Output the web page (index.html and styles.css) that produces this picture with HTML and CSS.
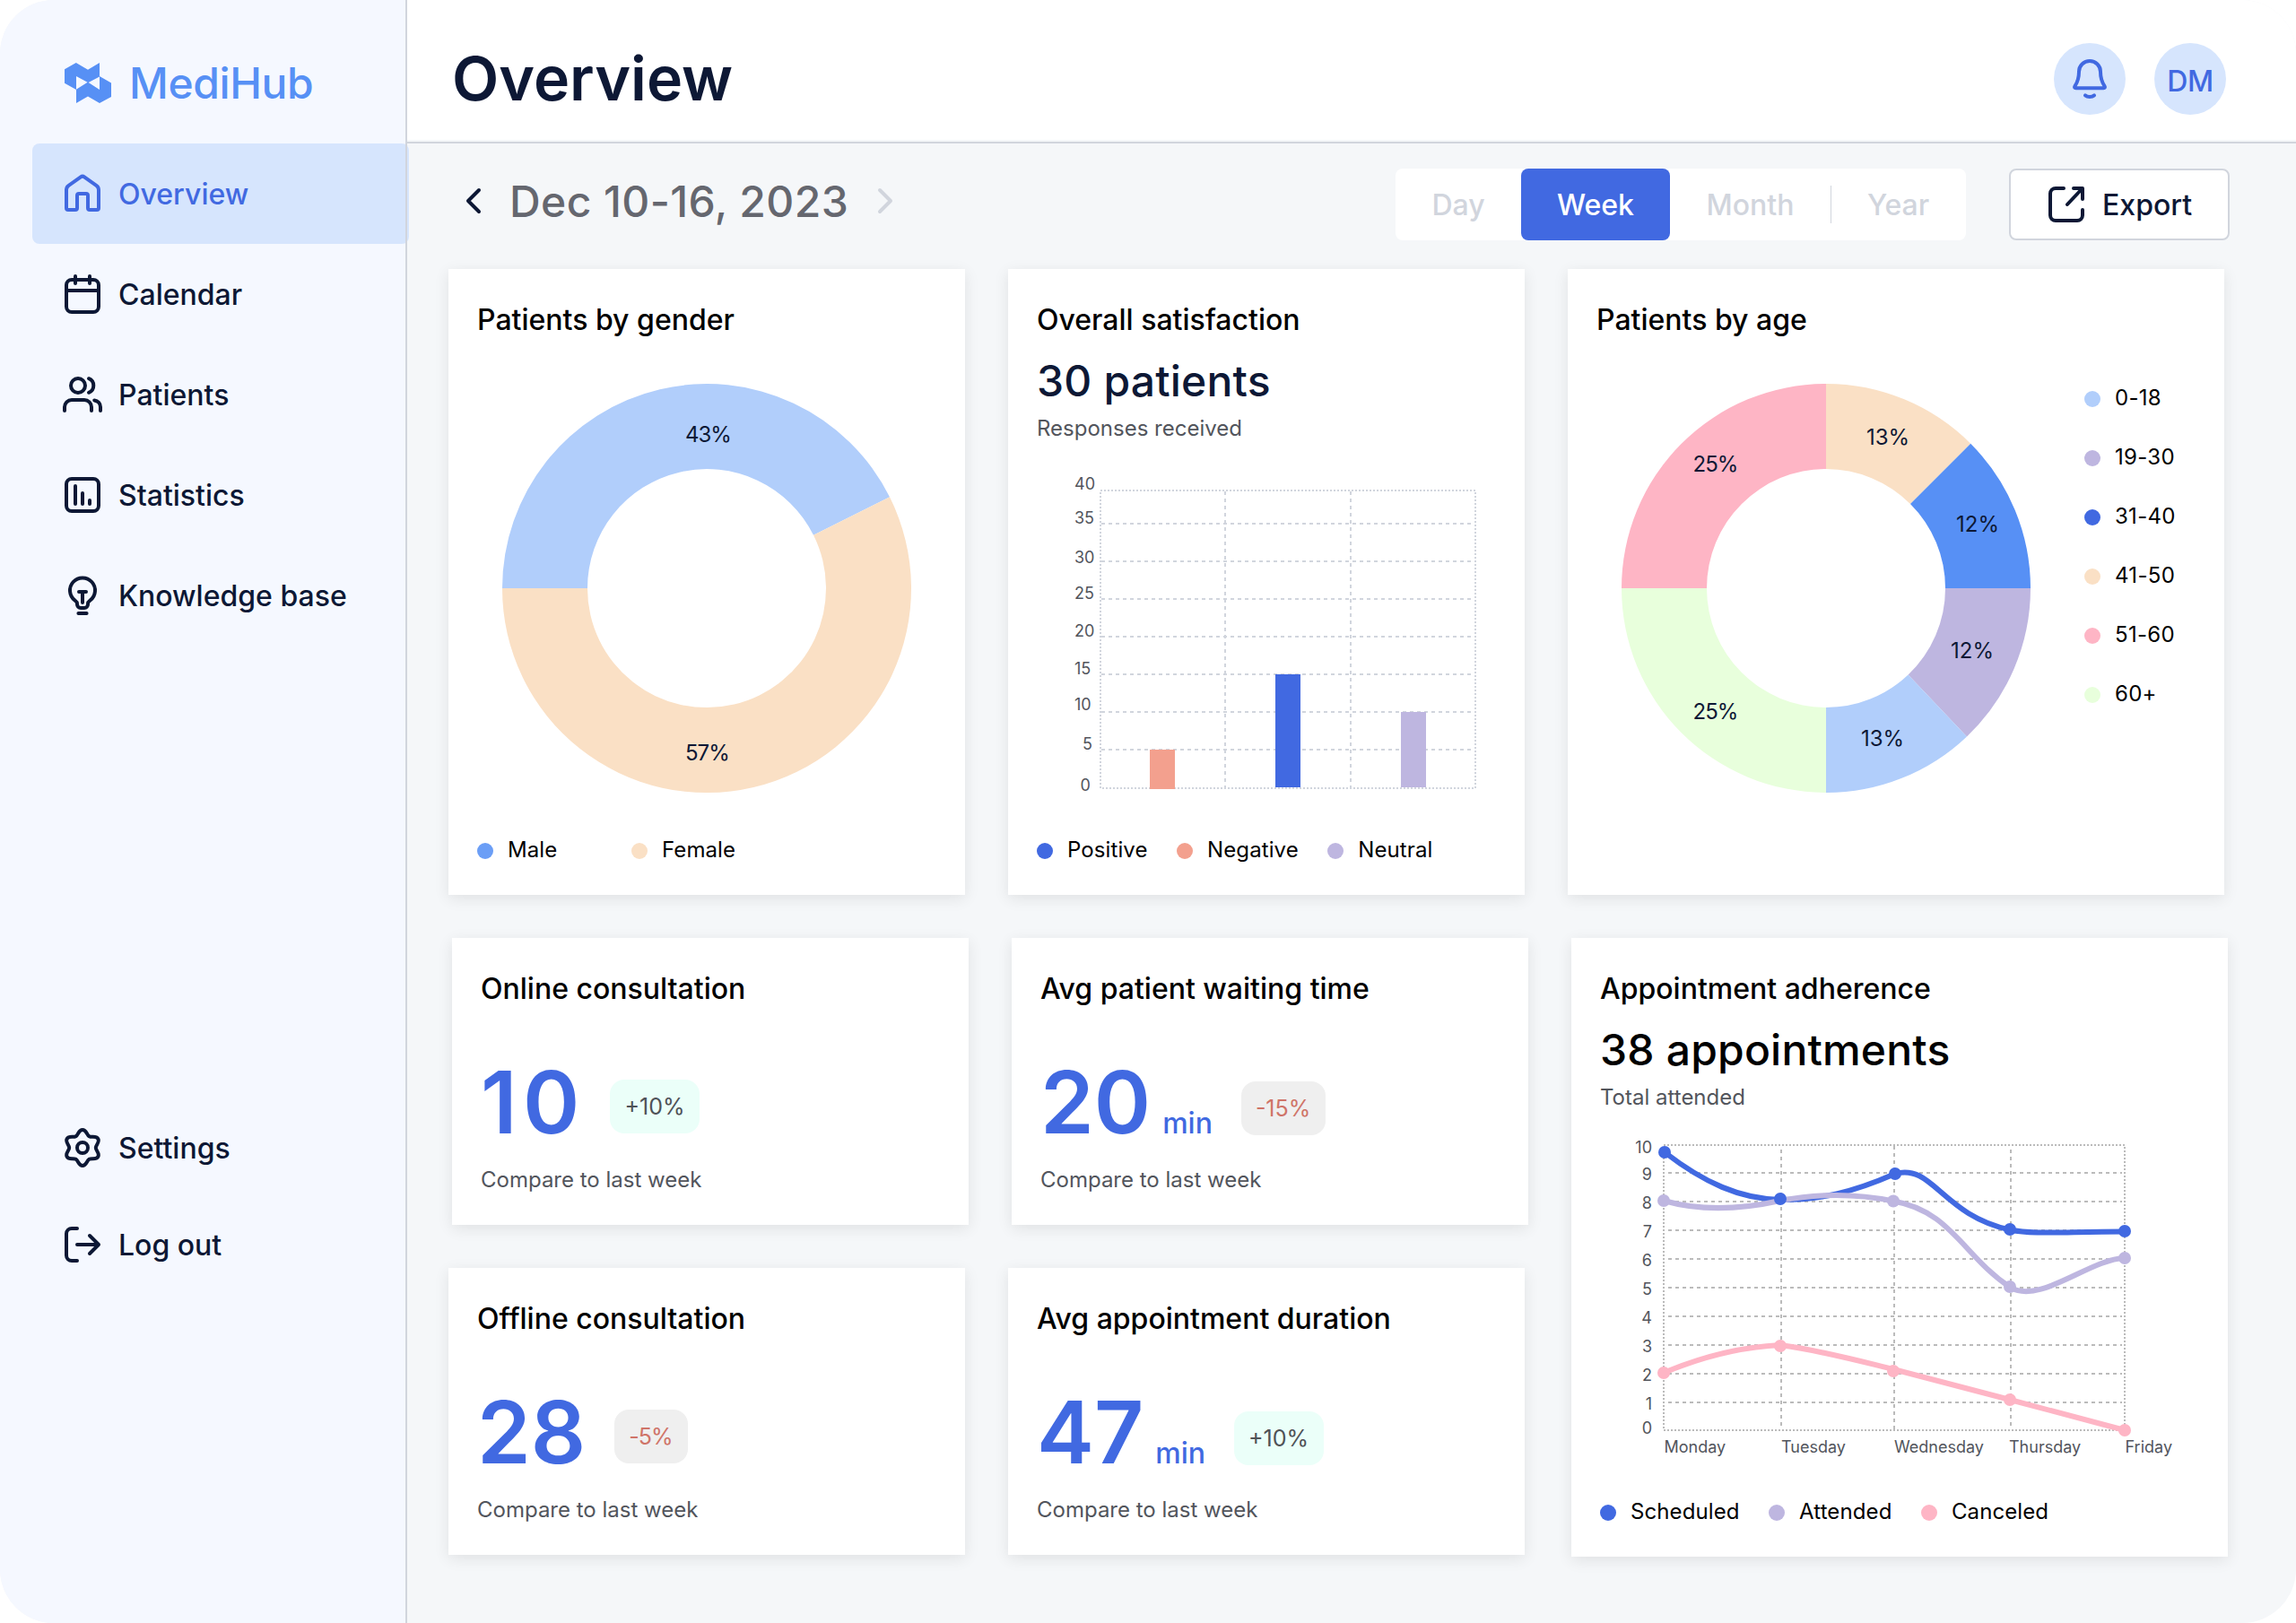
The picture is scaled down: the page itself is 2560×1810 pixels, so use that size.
FILE: index.html
```html
<!DOCTYPE html>
<html lang="en">
<head>
<meta charset="utf-8">
<title>MediHub – Overview</title>
<link rel="stylesheet" href="styles.css">
</head>
<body>
<div class="app">
  <aside class="sidebar">
    <div class="logo">
      <svg class="logo-mark" viewBox="0 0 52 45"><path fill-rule="evenodd" d="M0 7.3 12.8 0 26 7.7 39 0v15l13 7.4V38l-13 7-13-7.4L13 45V30L0 22.7zM13 15v14.8l12.6-8zM39 15.4 26.6 21.9 39 29.9z"/></svg>
      <span>MediHub</span>
    </div>
    <nav class="nav">
      <a class="nav-item active"><svg class="icon" viewBox="0 0 24 24"><path d="M3 9.9a3 3 0 0 1 1.3-2.5l6.7-4.7a1.7 1.7 0 0 1 2 0l6.7 4.7A3 3 0 0 1 21 9.9V20a1 1 0 0 1-1 1h-4a1 1 0 0 1-1-1v-7a1 1 0 0 0-1-1h-4a1 1 0 0 0-1 1v7a1 1 0 0 1-1 1H4a1 1 0 0 1-1-1z"/></svg>Overview</a>
      <a class="nav-item"><svg class="icon" viewBox="0 0 24 24"><rect x="3" y="4" width="18" height="18" rx="3"/><path d="M3 10h18M8 2v4M16 2v4"/></svg>Calendar</a>
      <a class="nav-item"><svg class="icon" viewBox="0 0 24 24"><circle cx="9.5" cy="7" r="4"/><path d="M15.5 3.1a4.2 4.2 0 0 1 0 7.8M2 21v-2a4 4 0 0 1 4-4h7a4 4 0 0 1 4 4v2M18.6 15.2C20.600 15.500 22 17 22 19v2"/></svg>Patients</a>
      <a class="nav-item"><svg class="icon" viewBox="0 0 24 24"><rect x="3" y="3" width="18" height="18" rx="3"/><path d="M8 7v10M12 11v6M16 15v2"/></svg>Statistics</a>
      <a class="nav-item"><svg class="icon" viewBox="0 0 24 24"><path d="M9 17v-.3c0-.8-.5-1.400-1.200-1.900a7 7 0 1 1 8.400 0c-.7.5-1.200 1.100-1.200 1.900v.3a2 2 0 0 1-2 2h-2a2 2 0 0 1-2-2zM10 10h4M12 10v6M9.700 22h4.600"/></svg>Knowledge base</a>
    </nav>
    <nav class="nav nav-secondary">
      <a class="nav-item"><svg class="icon" viewBox="0 0 24 24"><circle cx="12" cy="12" r="3"/><path d="M12 2C14.200 2 14.310 4.800 15.700 5.600S19.560 5.100 20.660 7 19.400 10.400 19.400 12 21.760 15.100 20.660 17 17.090 17.600 15.700 18.400 14.200 22 12 22 9.690 19.200 8.300 18.400 4.440 18.900 3.340 17 4.600 13.600 4.600 12 2.240 8.900 3.340 7 6.910 6.400 8.300 5.600 9.800 2 12 2z"/></svg>Settings</a>
      <a class="nav-item"><svg class="icon" viewBox="0 0 24 24"><path d="M9 3H6a3 3 0 0 0-3 3v12a3 3 0 0 0 3 3h3M9 12h12M16 7l5 5-5 5"/></svg>Log out</a>
    </nav>
  </aside>

  <div class="main">
    <header class="header">
      <h1>Overview</h1>
      <div class="header-actions">
        <button class="round"><svg class="icon" viewBox="0 0 24 24"><path d="M6 8a6 6 0 0 1 12 0c0 4 .9 6 2.300 8.100.4.600.1 1-.6 1H4.300c-.7 0-1-.4-.6-1C5.100 14 6 12 6 8zM9.500 21.200c1.300 1.100 3.700 1.100 5 0"/></svg></button>
        <button class="round initials">DM</button>
      </div>
    </header>

    <div class="toolbar">
      <div class="date-nav">
        <svg class="icon" viewBox="0 0 24 24"><path d="M15 6l-6 6 6 6"/></svg>
        <span class="date">Dec 10-16, 2023</span>
        <svg class="icon icon-muted" viewBox="0 0 24 24"><path d="M9 6l6 6-6 6"/></svg>
      </div>
      <div class="toolbar-right">
        <div class="segments">
          <button class="segment">Day</button>
          <button class="segment selected">Week</button>
          <button class="segment segment-month">Month</button>
          <button class="segment segment-year">Year</button>
        </div>
        <button class="export"><svg class="icon" viewBox="0 0 24 24"><path d="M10.500 3H6a3 3 0 0 0-3 3v12a3 3 0 0 0 3 3h12a3 3 0 0 0 3-3v-3M16 3h5v6M12.500 12l8-8.500"/></svg>Export</button>
      </div>
    </div>

    <main class="dashboard">
      <section class="row">
        <article class="card card-tall">
          <h2>Patients by gender</h2>
          <svg class="chart chart-donut" viewBox="532 420 512 472">
            <path fill="#b1cefb" d="M560 656A228 228 0 0 1 992 554.300L907 596.700A133 133 0 0 0 655 656z"/>
            <path fill="#fae0c5" d="M992 554.300A228 228 0 1 1 560 656H655A133 133 0 1 0 907 596.700z"/>
            <text class="pct tight" x="764" y="492.500">43%</text>
            <text class="pct tight" x="764" y="848">57%</text>
          </svg>
          <ul class="legend legend-gender">
            <li><i class="dot sky"></i><span>Male</span></li>
            <li><i class="dot sand"></i><span>Female</span></li>
          </ul>
        </article>

        <article class="card card-tall">
          <h2>Overall satisfaction</h2>
          <p class="headline navy">30 patients</p>
          <p class="caption">Responses received</p>
          <svg class="chart chart-bars" viewBox="1156 526 512 368">
            <g class="grid">
              <path class="dashes" d="M1228 584H1644M1228 626H1644M1228 668H1644M1228 710H1644M1228 752H1644M1228 794H1644M1228 836H1644M1366 548V878M1506 548V878"/>
              <rect class="dots" x="1227" y="547" width="418" height="332"/>
            </g>
            <path fill="#f3a08e" d="M1282 836h28v44h-28z"/>
            <path fill="#4169e1" d="M1422 752h28v126h-28z"/>
            <path fill="#beb6e0" d="M1562 794h28v84h-28z"/>
            <g class="axis">
              <text x="1198" y="546">40</text><text x="1198" y="584">35</text><text x="1198" y="628">30</text>
              <text x="1198" y="668">25</text><text x="1198" y="710">20</text><text x="1198" y="752">15</text>
              <text x="1198" y="792">10</text><text x="1207" y="836">5</text><text x="1204.500" y="882">0</text>
            </g>
          </svg>
          <ul class="legend">
            <li><i class="dot royal"></i><span>Positive</span></li>
            <li><i class="dot coral"></i><span>Negative</span></li>
            <li><i class="dot lavender"></i><span>Neutral</span></li>
          </ul>
        </article>

        <article class="card card-tall card-wide">
          <h2>Patients by age</h2>
          <div class="age">
            <svg class="chart" viewBox="1780 420 512 472" width="512" height="472">
              <path fill="#fae0c5" d="M2036 428A228 228 0 0 1 2197.200 494.800L2130 562A133 133 0 0 0 2036 523z"/>
              <path fill="#5790f5" d="M2197.200 494.800A228 228 0 0 1 2264 656H2169A133 133 0 0 0 2130 562z"/>
              <path fill="#beb6e0" d="M2264 656A228 228 0 0 1 2193 821.400L2127.600 752.500A133 133 0 0 0 2169 656z"/>
              <path fill="#b1cefb" d="M2193 821.400A228 228 0 0 1 2036 884V789A133 133 0 0 0 2127.600 752.500z"/>
              <path fill="#e8ffdc" d="M2036 884A228 228 0 0 1 1808 656H1903A133 133 0 0 0 2036 789z"/>
              <path fill="#feb5c5" d="M1808 656A228 228 0 0 1 2036 428V523A133 133 0 0 0 1903 656z"/>
              <text class="pct" x="2081" y="496">13%</text>
              <text class="pct" x="2181" y="592.500">12%</text>
              <text class="pct" x="2175" y="734">12%</text>
              <text class="pct" x="2075" y="832">13%</text>
              <text class="pct tight" x="1887.500" y="802">25%</text>
              <text class="pct tight" x="1887.500" y="526">25%</text>
            </svg>
            <ul class="legend legend-column">
              <li><i class="dot ice"></i><span>0-18</span></li>
              <li><i class="dot lavender"></i><span>19-30</span></li>
              <li><i class="dot royal"></i><span>31-40</span></li>
              <li><i class="dot sand"></i><span>41-50</span></li>
              <li><i class="dot pink"></i><span>51-60</span></li>
              <li><i class="dot lime"></i><span>60+</span></li>
            </ul>
          </div>
        </article>
      </section>

      <section class="row">
        <div class="stats">
          <div class="row row-indent">
            <article class="card card-stat">
              <h2>Online consultation</h2>
              <div class="figure"><span class="value spaced">10</span><span class="badge up">+10%</span></div>
              <p class="caption">Compare to last week</p>
            </article>
            <article class="card card-stat">
              <h2>Avg patient waiting time</h2>
              <div class="figure"><span class="value">20<small>min</small></span><span class="badge down low">-15%</span></div>
              <p class="caption">Compare to last week</p>
            </article>
          </div>
          <div class="row">
            <article class="card card-stat">
              <h2>Offline consultation</h2>
              <div class="figure"><span class="value">28</span><span class="badge down tight">-5%</span></div>
              <p class="caption">Compare to last week</p>
            </article>
            <article class="card card-stat">
              <h2>Avg appointment duration</h2>
              <div class="figure"><span class="value">47<small>min</small></span><span class="badge up low">+10%</span></div>
              <p class="caption">Compare to last week</p>
            </article>
          </div>
        </div>

        <article class="card card-wide card-adherence">
          <h2>Appointment adherence</h2>
          <p class="headline">38 appointments</p>
          <p class="caption">Total attended</p>
          <svg class="chart chart-lines" viewBox="1784 1264 668 368">
            <g class="grid grid-dark">
              <path class="dashes" d="M1860 1308H2366M1860 1340H2366M1860 1372H2366M1860 1404H2366M1860 1436H2366M1860 1468H2366M1860 1500H2366M1860 1532H2366M1860 1564H2366M1986 1282V1594M2112 1278V1594M2242 1282V1594"/>
              <rect class="dots" x="1855" y="1277" width="514" height="318"/>
            </g>
            <g class="axis axis-end">
              <text x="1842" y="1286">10</text><text x="1842" y="1315.500">9</text><text x="1842" y="1347.500">8</text>
              <text x="1842" y="1379.500">7</text><text x="1842" y="1411.500">6</text><text x="1842" y="1443.500">5</text>
              <text x="1842" y="1475.500">4</text><text x="1842" y="1507.500">3</text><text x="1842" y="1540">2</text>
              <text x="1842" y="1571.500">1</text><text x="1842" y="1598.500">0</text>
            </g>
            <g class="axis">
              <text x="1855.500" y="1620">Monday</text><text x="1986" y="1620">Tuesday</text><text x="2112" y="1620">Wednesday</text>
              <text x="2240" y="1620">Thursday</text><text x="2369.500" y="1620">Friday</text>
            </g>
            <path class="line" stroke="#4169e1" d="M1856 1285C1900 1319 1940 1337 1985 1338C2030 1338 2065 1330 2113 1309C2155 1297 2165 1355 2241 1371.500C2268 1377 2300 1373.500 2369 1373.500"/>
            <path class="line" stroke="#beb6e0" d="M1855 1339C1897 1351 1940 1349 1985 1339C2027 1331 2070 1331 2111 1339.500C2175 1350 2190 1402 2242 1436C2275 1455 2330 1404 2369 1403"/>
            <path class="line" stroke="#feb5c5" d="M1855 1531C1900 1512 1945 1502 1985 1500C2025 1505 2070 1517 2111 1527L2241 1561L2369 1595"/>
            <g fill="#beb6e0"><circle cx="1855" cy="1339" r="7"/><circle cx="2111" cy="1339.500" r="7"/><circle cx="2241" cy="1435" r="7"/><circle cx="2369" cy="1403" r="7"/></g>
            <g fill="#4169e1"><circle cx="1856" cy="1285" r="7"/><circle cx="1985" cy="1337" r="7"/><circle cx="2113" cy="1309" r="7"/><circle cx="2241" cy="1371" r="7"/><circle cx="2369" cy="1373" r="7"/></g>
            <g fill="#feb5c5"><circle cx="1855" cy="1531" r="7"/><circle cx="1985" cy="1501" r="7"/><circle cx="2111" cy="1529" r="7"/><circle cx="2241" cy="1561" r="7"/><circle cx="2369" cy="1595" r="7"/></g>
          </svg>
          <ul class="legend">
            <li><i class="dot royal"></i><span>Scheduled</span></li>
            <li><i class="dot lavender"></i><span>Attended</span></li>
            <li><i class="dot pink"></i><span>Canceled</span></li>
          </ul>
        </article>
      </section>
    </main>
  </div>
</div>
</body>
</html>
```
FILE: styles.css
```css
* { box-sizing: border-box; margin: 0; padding: 0; }

body {
  background: #fff;
  color: #000;
  font-family: Inter, "Liberation Sans", sans-serif;
  font-size: 32px;
  font-weight: 500;
}

button { border: 0; background: none; font: inherit; color: inherit; }
ul { list-style: none; }

.app {
  display: flex;
  width: 2560px;
  height: 1810px;
  border-radius: 60px;
  overflow: hidden;
  background: #f5f7f9;
}

.icon {
  flex: none;
  width: 48px;
  height: 48px;
  fill: none;
  stroke: currentColor;
  stroke-width: 2;
  stroke-linecap: round;
  stroke-linejoin: round;
}
.icon-muted { margin-left: 1px; color: #d1d5dd; }

/* Sidebar */
.sidebar {
  position: relative;
  z-index: 1;
  flex: none;
  width: 454px;
  padding-top: 64px;
  background: #f5f8ff;
  color: #0d1835;
}
.sidebar::after {
  content: "";
  position: absolute;
  top: 0;
  right: 0;
  bottom: 0;
  width: 2px;
  background: #d1d5dd;
}
.logo {
  display: flex;
  align-items: center;
  gap: 20px;
  height: 57px;
  margin-bottom: 39px;
  padding-left: 72px;
  color: #5790f5;
  font-size: 48px;
  font-weight: 450;
  letter-spacing: -0.4px;
}
.logo-mark { width: 52px; height: 45px; fill: currentColor; }
.nav { display: flex; flex-direction: column; margin-left: 36px; }
.nav-item {
  display: flex;
  align-items: center;
  gap: 16px;
  width: 420px;
  height: 112px;
  padding-left: 32px;
  border-radius: 8px;
}
.nav-item.active { background: #d6e5fd; color: #4169e1; }
.nav-secondary { margin-top: 506px; }
.nav-secondary .nav-item { height: 108px; }

/* Header */
.main { flex: 1; }
.header {
  display: flex;
  justify-content: space-between;
  align-items: flex-start;
  height: 160px;
  padding: 48px 78px 0 50px;
  border-bottom: 2px solid #d1d5dd;
  background: #fff;
  box-shadow: inset 0 -2px #f5f7f9;
}
.header h1 {
  color: #0d1835;
  font-size: 68px;
  font-weight: 600;
  line-height: 79px;
}
.header-actions { display: flex; gap: 32px; }
.round {
  display: flex;
  align-items: center;
  justify-content: center;
  width: 80px;
  height: 80px;
  border-radius: 50%;
  background: #d6e5fd;
  color: #4169e1;
}
.initials { padding-top: 4px; font-weight: 450; letter-spacing: -0.3px; }

/* Toolbar */
.toolbar {
  display: flex;
  justify-content: space-between;
  align-items: flex-start;
  height: 140px;
  padding: 28px 74px 0 50px;
}
.date-nav { display: flex; align-items: center; gap: 16px; height: 72px; color: #0d1835; }
.date { color: #65676f; font-size: 48px; font-weight: 480; letter-spacing: 0.4px; }
.toolbar-right { display: flex; gap: 48px; }
.segments {
  display: flex;
  align-items: center;
  height: 80px;
  border-radius: 8px;
  background: #fff;
}
.segment { width: 140px; height: 80px; border-radius: 8px; color: #d1d5dd; font-weight: 470; }
.segment.selected { width: 166px; background: #4169e1; color: #fff; font-weight: 500; }
.segment-month { width: 179px; }
.segment-year {
  width: 151px;
  background: linear-gradient(#d1d5dd, #d1d5dd) left center / 1px 42px no-repeat;
}
.export {
  display: flex;
  align-items: center;
  gap: 16px;
  width: 246px;
  height: 80px;
  padding-left: 38px;
  border: 2px solid #d1d5dd;
  border-radius: 8px;
  background: #fff;
  color: #0d1835;
}

/* Cards */
.dashboard { display: flex; flex-direction: column; gap: 48px; padding-left: 46px; }
.row { display: flex; align-items: flex-start; gap: 48px; }
.row-indent { margin-left: 4px; }
.stats { display: flex; flex-direction: column; gap: 48px; width: 1204px; }
.card {
  flex: none;
  width: 576px;
  padding: 37px 32px 0;
  background: #fff;
  box-shadow: 0 4px 16px rgba(0, 0, 0, 0.09);
}
.card-tall { height: 698px; }
.card-wide { width: 732px; }
.card-stat { height: 320px; }
.card-adherence { height: 690px; }
.card h2 { font-size: 32px; font-weight: 500; line-height: 40px; }
.headline { margin-top: 20px; font-size: 48px; line-height: 56px; letter-spacing: 0.2px; }
.navy { color: #0d1835; }
.caption {
  margin-top: 9px;
  color: #52555c;
  font-size: 24px;
  font-weight: 400;
  line-height: 32px;
}

/* Key figures */
.figure { display: flex; align-items: flex-start; height: 100px; margin-top: 56px; gap: 32px; }
.figure + .caption { margin-top: 21px; }
.value { color: #4169e1; font-size: 96px; font-weight: 600; line-height: 100px; }
.value.spaced { margin-right: -4.5px; letter-spacing: 6.5px; }
.value small { margin-left: 13px; font-size: 32px; font-weight: 500; }
.badge {
  height: 60px;
  margin-top: 25px;
  padding: 0 17px 0 16px;
  border-radius: 16px;
  font-size: 25px;
  font-weight: 400;
  line-height: 61px;
}
.badge.low { margin-top: 27px; }
.up { background: #ebfff9; color: #4f5257; }
.down { background: #efefef; color: #cf7468; }
.tight { letter-spacing: -1px; }

/* Charts */
.chart { display: block; }
.chart-donut { width: 512px; height: 472px; margin-top: 43px; }
.chart-bars { width: 512px; height: 368px; margin-top: 32px; }
.chart-lines { width: 668px; height: 368px; margin-top: 24px; }
.pct { fill: #0d1835; font-size: 24px; font-weight: 400; }
.axis { fill: #52555c; font-size: 18px; font-weight: 400; }
.axis-end { text-anchor: end; }
.grid { fill: none; stroke: #d1d5dd; stroke-width: 2; }
.grid-dark { stroke: #bbb; }
.dashes { stroke-dasharray: 4 4; }
.dots { stroke-dasharray: 2 2; }
.line { fill: none; stroke-width: 6; stroke-linejoin: round; }

/* Legends */
.legend { display: flex; gap: 32.500px; margin-top: 39px; font-size: 24px; font-weight: 400; letter-spacing: 0.1px; }
.legend li { display: flex; align-items: center; gap: 16px; height: 32px; }
.legend span { padding-bottom: 3px; line-height: 29px; }
.legend-gender { margin-top: 41px; gap: 0; }
.legend-gender li { width: 172px; }
.legend-column { flex-direction: column; gap: 34px; margin: 9px 0 0 32px; letter-spacing: 0.3px; }
.age { display: flex; align-items: flex-start; margin-top: 43px; }
.dot { width: 18px; height: 18px; border-radius: 50%; }
.sky { background: #6b9ef6; }
.ice { background: #b1cefb; }
.sand { background: #fae0c5; }
.royal { background: #4169e1; }
.coral { background: #f3a08e; }
.lavender { background: #beb6e0; }
.pink { background: #feb5c5; }
.lime { background: #e8ffdc; }
```
